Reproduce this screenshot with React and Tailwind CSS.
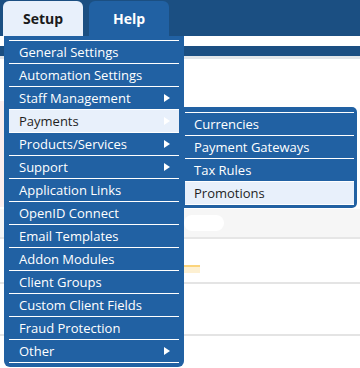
import React from "react";

const items = [
  { label: "General Settings" },
  { label: "Automation Settings" },
  { label: "Staff Management", sub: true },
  { label: "Payments", sub: true, active: true },
  { label: "Products/Services", sub: true },
  { label: "Support", sub: true },
  { label: "Application Links" },
  { label: "OpenID Connect" },
  { label: "Email Templates" },
  { label: "Addon Modules" },
  { label: "Client Groups" },
  { label: "Custom Client Fields" },
  { label: "Fraud Protection" },
  { label: "Other", sub: true },
];

const subItems = [
  { label: "Currencies" },
  { label: "Payment Gateways" },
  { label: "Tax Rules" },
  { label: "Promotions", active: true },
];

function Arrow() {
  return (
    <svg width="6" height="8" viewBox="0 0 6 8" className="shrink-0">
      <polygon points="0,0 6,4 0,8" fill="#ffffff" />
    </svg>
  );
}

export default function App() {
  return (
    <div className="relative w-[360px] h-[368px] overflow-hidden bg-white font-['Open_Sans',sans-serif]">
      {/* top bar with tabs */}
      <div className="h-[36px] bg-[#1b4f82] flex items-end gap-[6px] pl-[3px]">
        <div className="h-[35px] w-[80px] rounded-t-[6px] bg-[#e8f0fb] flex items-center justify-center text-[14px] font-bold text-[#1a1a1a]">
          Setup
        </div>
        <div className="h-[35px] w-[80px] rounded-t-[6px] bg-[#2161a3] flex items-center justify-center text-[14px] font-bold text-white">
          Help
        </div>
      </div>

      {/* page content behind */}
      <div className="flex flex-col">
        <div className="h-[10px] bg-white" />
        <div className="h-[10px] bg-[#1b4f82]" />
        <div className="h-[3px] bg-[#e1e5e8]" />
        <div className="h-[150px] bg-white flex">
          <div className="w-[4px] mt-[42px] h-[106px] bg-[#fbeeee]" />
        </div>
        <div className="h-[28px] bg-[#f6f6f6] flex items-center pl-[184px]">
          <div className="w-[40px] h-[16px] rounded-full bg-white" />
        </div>
        <div className="h-[2px] bg-[#e6e6e6]" />
        <div className="h-[26px] bg-white" />
        <div className="ml-[180px] w-[20px] h-[8px] bg-[#fdf0d2] border-t-2 border-[#fbd47c]" />
        <div className="h-[9px] bg-white" />
        <div className="h-[2px] bg-[#e4e4e4]" />
        <div className="h-[50px] bg-white" />
        <div className="h-[2px] bg-[#e4e4e4]" />
      </div>

      {/* main dropdown */}
      <div className="absolute left-[4px] top-[36px] w-[180px] bg-[#2161a3] pt-[4px] pb-[4px] px-[5px] rounded-b-[6px]">
        <div className="border-t border-white">
          {items.map((it) => (
            <div
              key={it.label}
              className={
                "h-[23px] border-b border-white flex items-center justify-between pl-[10px] pr-[9px] text-[13px] leading-none " +
                (it.active ? "bg-[#e8f0fb] text-[#1f1f1f]" : "text-white")
              }
            >
              <span>{it.label}</span>
              {it.sub ? <Arrow /> : null}
            </div>
          ))}
        </div>
      </div>

      {/* submenu */}
      <div className="absolute left-[184px] top-[107px] w-[173px] bg-[#2161a3] pt-[5px] pb-[3px] pl-[1px] pr-[3px] rounded-r-[5px]">
        <div className="border-t border-white">
          {subItems.map((it) => (
            <div
              key={it.label}
              className={
                "h-[23px] border-b border-white flex items-center pl-[9px] text-[13px] leading-none " +
                (it.active ? "bg-[#e8f0fb] text-[#1f1f1f] border-[#e8f0fb]" : "text-white")
              }
            >
              {it.label}
            </div>
          ))}
        </div>
      </div>
    </div>
  );
}
